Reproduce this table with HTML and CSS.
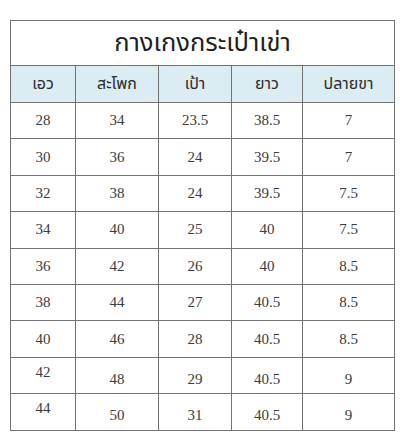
FILE: index.html
```html
<!DOCTYPE html>
<html>
<head>
<meta charset="utf-8">
<link rel="stylesheet" href="styles.css">
</head>
<body>
<table class="size">
  <colgroup>
    <col class="c1"><col class="c2"><col class="c3"><col class="c4"><col class="c5">
  </colgroup>
  <tr><th colspan="5" class="title">กางเกงกระเป๋าเข่า</th></tr>
  <tr class="head"><th>เอว</th><th>สะโพก</th><th>เป้า</th><th>ยาว</th><th>ปลายขา</th></tr>
  <tr><td>28</td><td>34</td><td>23.5</td><td>38.5</td><td>7</td></tr>
  <tr><td>30</td><td>36</td><td>24</td><td>39.5</td><td>7</td></tr>
  <tr><td>32</td><td>38</td><td>24</td><td>39.5</td><td>7.5</td></tr>
  <tr><td>34</td><td>40</td><td>25</td><td>40</td><td>7.5</td></tr>
  <tr><td>36</td><td>42</td><td>26</td><td>40</td><td>8.5</td></tr>
  <tr><td>38</td><td>44</td><td>27</td><td>40.5</td><td>8.5</td></tr>
  <tr><td>40</td><td>46</td><td>28</td><td>40.5</td><td>8.5</td></tr>
  <tr class="low"><td class="hi">42</td><td>48</td><td>29</td><td>40.5</td><td>9</td></tr>
  <tr class="low"><td class="hi">44</td><td>50</td><td>31</td><td>40.5</td><td>9</td></tr>
</table>
</body>
</html>
```
FILE: styles.css
```css
html, body {
  margin: 0;
  padding: 0;
  background: #ffffff;
}
body {
  padding: 20px 0 0 10px;
}
.size {
  border-collapse: collapse;
  table-layout: fixed;
  width: 384px;
  border: 1.5px solid #727272;
  font-family: "Liberation Serif", serif;
  color: #3c3c3c;
}
.c1 { width: 65px; }
.c2 { width: 83px; }
.c3 { width: 73px; }
.c4 { width: 71px; }
.c5 { width: 92px; }
.size th, .size td {
  border: 1.5px solid #727272;
  text-align: center;
  padding: 0;
}
.title {
  height: 44px;
  font-family: "Noto Sans Thai", "Leelawadee UI", "Tahoma", "Noto Sans", sans-serif;
  font-weight: normal;
  font-size: 25.5px;
  color: #1e1e1e;
  background: #ffffff;
}
.head th {
  height: 36px;
  background: #dcecf3;
  font-family: "Noto Sans Thai", "Tahoma", "Noto Sans", sans-serif;
  font-weight: normal;
  font-size: 16px;
  color: #2a2a2a;
}
.size td {
  height: 35.4px;
  font-size: 15px;
}
.low td {
  padding-top: 8px;
  height: 27.4px;
}
.low td.hi {
  padding-top: 0;
  padding-bottom: 6px;
  height: 29.4px;
}
```
